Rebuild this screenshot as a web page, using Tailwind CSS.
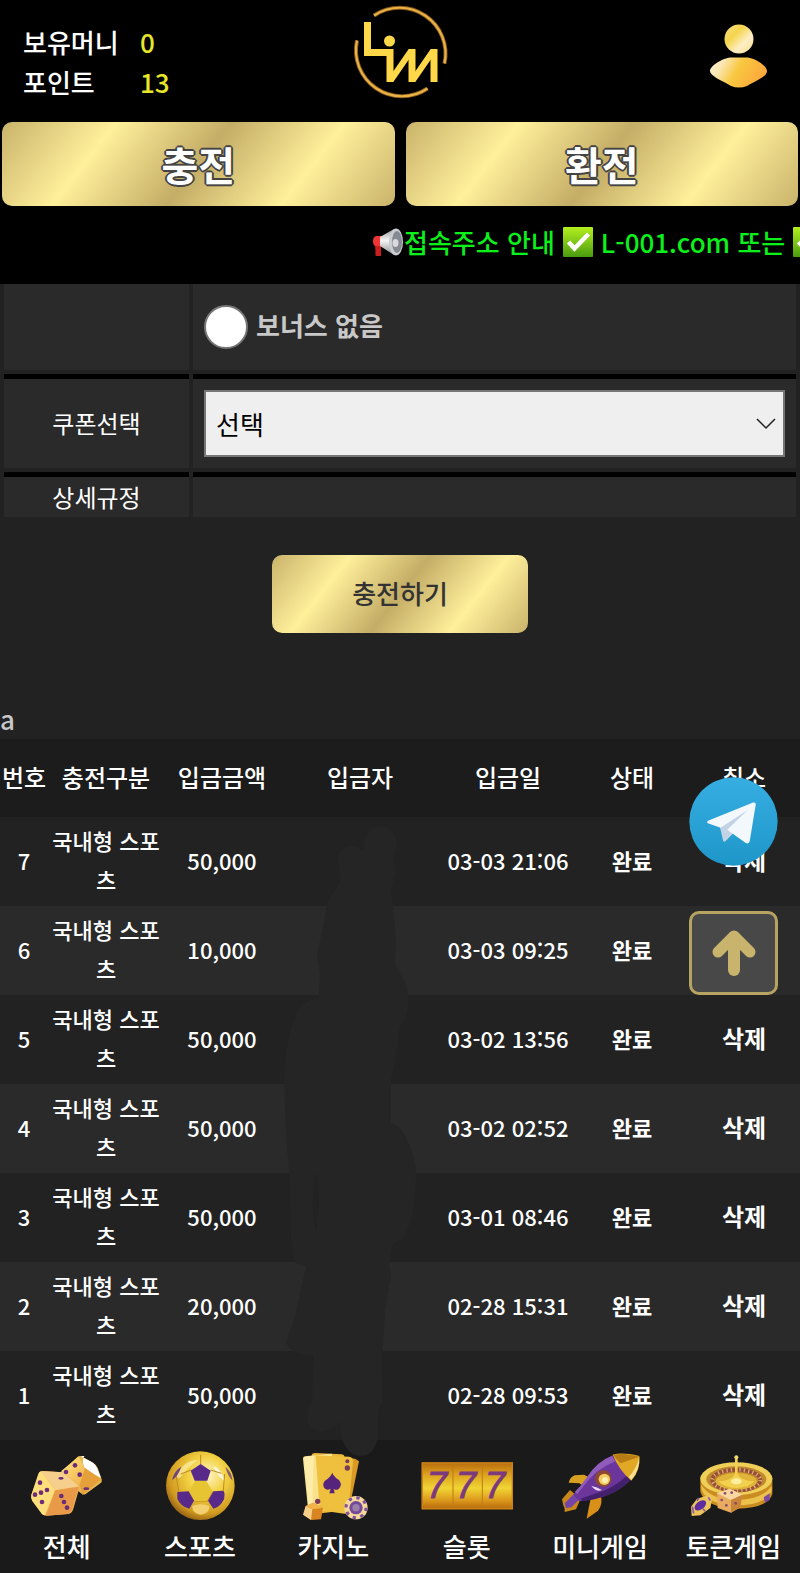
<!DOCTYPE html>
<html lang="ko">
  <head>
    <meta charset="UTF-8" />
    <meta name="viewport" content="width=device-width, initial-scale=1.0" />
    <title>충전</title>
    <script src="https://cdn.jsdelivr.net/npm/@tailwindcss/browser@4"></script>
  </head>
  <body class="bg-[#222] min-h-screen font-['Noto_Sans_CJK_KR',sans-serif] text-white">
    <!-- Header -->
    <header class="bg-black">
      <div class="relative flex items-center justify-between h-[122px] pt-[2px] pl-[23px] pr-[31px]">
        <dl class="grid grid-cols-[117px_auto] text-[26px] leading-[40px] font-medium">
          <dt>보유머니</dt>
          <dd class="text-[#e6e62a]">0</dd>
          <dt>포인트</dt>
          <dd class="text-[#e6e62a]">13</dd>
        </dl>

        <a href="#" aria-label="홈" class="absolute inset-x-0 top-0 mx-auto w-[110px]">
          <svg viewBox="0 0 110 105" class="w-full" fill="none">
            <g stroke="#8a5a14" stroke-width="4">
              <path d="M29 15.5A46 46 0 0 1 99.5 63.5" />
              <path d="M12 40.5A46 46 0 0 0 82.5 88.5" />
            </g>
            <g stroke="#e8b24a" stroke-width="2.2">
              <path d="M29 15.5A46 46 0 0 1 99.5 63.5" />
              <path d="M12 40.5A46 46 0 0 0 82.5 88.5" />
            </g>
            <g stroke="#ffd84a">
              <path d="M22.5 22V52.5H45V82" stroke-width="7" />
              <path d="M67 49V82M89 49V82" stroke-width="7" />
              <path d="M46 80L66 51M68 80L88 51" stroke-width="6" />
            </g>
            <circle cx="44.500" cy="41" r="5.500" fill="#ffd84a" />
          </svg>
        </a>

        <a href="#" aria-label="내 정보">
          <svg viewBox="0 0 60 66" class="w-[60px] h-[66px] mt-[-14px]">
            <defs>
              <linearGradient id="head" x1="0" y1="0" x2="1" y2="1">
                <stop offset="0" stop-color="#fbe08a" />
                <stop offset=".35" stop-color="#f5d54c" />
                <stop offset=".65" stop-color="#fdeec4" />
                <stop offset="1" stop-color="#f8e090" />
              </linearGradient>
              <linearGradient id="torso" x1="0" y1="0" x2="1" y2=".3">
                <stop offset="0" stop-color="#fff3d6" />
                <stop offset=".25" stop-color="#fbe7b4" />
                <stop offset=".55" stop-color="#f8c840" />
                <stop offset="1" stop-color="#fdaa3c" />
              </linearGradient>
            </defs>
            <circle cx="30" cy="17" r="14.500" fill="url(#head)" />
            <path d="M21 35.500h18c7 1 19 8 19 13.500s-10 9-20 15q-8 3-16 0C12 58 1 54 1 49s12-12.500 20-13.500z" fill="url(#torso)" />
          </svg>
        </a>
      </div>

      <div class="grid grid-cols-2 gap-[11px] px-[2px]">
        <button class="h-[84px] rounded-[10px] bg-[linear-gradient(128deg,#c9b36b,#fff09b_25%,#c4ad66_50%,#fff09b_75%,#c9b36b)] text-[40px] font-bold [text-shadow:-2px_0_#444,2px_0_#444,0_-2px_#444,0_2px_#444,-1px_-1px_#444,1px_-1px_#444,-1px_1px_#444,1px_1px_#444]">충전</button>
        <button class="h-[84px] rounded-[10px] bg-[linear-gradient(128deg,#c9b36b,#fff09b_25%,#c4ad66_50%,#fff09b_75%,#c9b36b)] text-[40px] font-bold [text-shadow:-2px_0_#444,2px_0_#444,0_-2px_#444,0_2px_#444,-1px_-1px_#444,1px_-1px_#444,-1px_1px_#444,1px_1px_#444]">환전</button>
      </div>

      <!-- Notice ticker -->
      <div class="overflow-hidden pt-4 pb-[22px]">
        <p class="flex items-center ml-[46.500%] text-[26px] leading-[40px] font-medium text-[#0cf01c] whitespace-nowrap">
          <svg viewBox="0 0 32 30" class="w-8 h-[30px] shrink-0">
            <defs>
              <linearGradient id="horn" x1="0" y1="0" x2="0" y2="1">
                <stop offset="0" stop-color="#9a9a9a" />
                <stop offset=".45" stop-color="#f4f4f4" />
                <stop offset="1" stop-color="#8c8c8c" />
              </linearGradient>
            </defs>
            <path d="M3 17l6-1v13H4.500q-1.500 0-1-3z" fill="#c81e1e" />
            <path d="M4 9h6v10H3q-2-1-2-5t3-5z" fill="#ee3434" />
            <path d="M8 10L22 2v26L8 19z" fill="url(#horn)" />
            <ellipse cx="24" cy="15" rx="7" ry="13.500" fill="#c9ccd0" />
            <ellipse cx="25" cy="15" rx="5" ry="11" fill="#858a90" />
            <ellipse cx="23.500" cy="16" rx="3" ry="4" fill="#d8dadc" />
          </svg>
          <span>접속주소 안내</span>
          <svg viewBox="0 0 30 30" class="w-[30px] h-[30px] mx-2 shrink-0">
            <defs>
              <linearGradient id="check" x1="0" y1="0" x2="0" y2="1">
                <stop offset="0" stop-color="#b4f01e" />
                <stop offset="1" stop-color="#4a9c10" />
              </linearGradient>
            </defs>
            <rect width="30" height="30" rx="1" fill="url(#check)" />
            <path d="M5.500 15l6 6.500L25.500 7" fill="none" stroke="#fff" stroke-width="4.500" />
          </svg>
          <span>L-001.com 또는</span>
          <svg viewBox="0 0 30 30" class="w-[30px] h-[30px] mx-2 shrink-0">
            <rect width="30" height="30" rx="1" fill="url(#check)" />
            <path d="M5.500 15l6 6.500L25.500 7" fill="none" stroke="#fff" stroke-width="4.500" />
          </svg>
        </p>
      </div>
    </header>

    <main>
      <!-- Deposit form -->
      <form>
        <div class="grid grid-cols-[185px_1fr] gap-1 px-1 text-[24px] leading-[40px]">
          <div class="bg-[#2a2a2a]"></div>
          <div class="flex items-center h-[86px] px-[11px] bg-[#2a2a2a]">
            <input id="noBonus" type="radio" name="bonus" class="appearance-none size-11 rounded-full bg-white border-2 border-[#767676]" />
            <label for="noBonus" class="ml-2 pb-1 text-[26px] font-bold text-[#c8c8c8]">보너스 없음</label>
          </div>

          <label for="coupon" class="flex items-center justify-center pb-[2px] border-t-[5px] border-black bg-[#2a2a2a]">쿠폰선택</label>
          <div class="relative p-[11px] border-t-[5px] border-black bg-[#2a2a2a]">
            <select id="coupon" class="appearance-none block w-full h-[67px] px-[10px] bg-[#efefef] border-2 border-[#767676] text-[26px] text-black">
              <option>선택</option>
            </select>
            <svg viewBox="0 0 20 12" class="absolute right-5 top-[39px] w-5 h-3 pointer-events-none" fill="none" stroke="#222" stroke-width="1.500">
              <path d="M1 1l9 9 9-9" />
            </svg>
          </div>

          <div class="text-center border-t-[5px] border-black bg-[#2a2a2a]">상세규정</div>
          <div class="border-t-[5px] border-black bg-[#2a2a2a]"></div>
        </div>

        <button type="button" class="block w-64 h-[78px] mx-auto mt-[38px] pb-1 rounded-[10px] bg-[linear-gradient(128deg,#c9b36b,#fff09b_25%,#c4ad66_50%,#fff09b_75%,#c9b36b)] text-[26px] font-medium text-[#333]">충전하기</button>
      </form>

      <p class="mt-[66px] text-[26px] leading-[40px] font-medium text-[#c8c8c8]">a</p>

      <!-- Deposit history -->
      <section class="relative">
        <table class="w-full table-fixed border-collapse text-center text-[22px] leading-[39px] font-medium">
          <thead>
            <tr class="h-[78px] bg-[#1c1c1c] text-[24px]">
              <th class="w-[6%] pb-1 font-medium whitespace-nowrap">번호</th>
              <th class="w-[14.500%] pb-1 font-medium">충전구분</th>
              <th class="w-[14.500%] pb-1 font-medium">입금금액</th>
              <th class="w-[20%] pb-1 font-medium">입금자</th>
              <th class="w-[17%] pb-1 font-medium">입금일</th>
              <th class="w-[14%] pb-1 font-medium">상태</th>
              <th class="w-[14%] pb-1 font-medium">취소</th>
            </tr>
          </thead>
          <tbody id="historyBody">
            <!-- JS will populate here -->
          </tbody>
        </table>

        <!-- Covers the depositor names -->
        <svg viewBox="0 0 180 650" class="absolute left-[32.500%] top-[71px] w-[180px] h-[650px] pointer-events-none" fill="#252525">
          <path d="M104 33C105 22 112 16 121 16S137 25 137 35L133 50 136 60 131 80 133 97 136 130 135 155 146 174Q150 195 147 205L140 217 136 245 131 270 131 300V313Q143 317 147 330 156 345 156 365C156 395 152 415 142 430L133 434 129 455 131 465 125 500 122 550 123 590 118 602V620C118 635 112 646 101 646S80 635 80 612L78 614Q60 627 50 616 44 606 52 590L53 545Q30 545 26 532L34 510 46 457 37 454Q32 445 31 430L30 375 26 320 24 270C25 240 30 215 38 200Q46 190 59 187L60 165 57 145 64 112 68 90 80 73 78 48Q80 36 92 36 100 37 104 42z" />
          <path d="M55 364q5 6 4 28l-3 30q-6-24-1-58z" fill="#222" />
        </svg>

        <!-- Floating buttons -->
        <div class="absolute right-[22px] top-[38px] flex flex-col gap-[45px]">
          <a href="#" aria-label="텔레그램">
            <svg viewBox="0 0 266 268" class="w-[89px] h-[89px]">
              <defs>
                <linearGradient id="tg" x1="0" y1="0" x2="0" y2="1">
                  <stop offset="0" stop-color="#37aee2" />
                  <stop offset="1" stop-color="#1e96c8" />
                </linearGradient>
              </defs>
              <circle cx="133" cy="134" r="133" fill="url(#tg)" />
              <path d="M92 150l10 43q3 4 8-1l24-24-10-22z" fill="#c3d3e6" />
              <path d="M54 134q-3 4 4 6l36 13 20 6 56 40q10 4 12-6l18-111q0-7-8-5L58 131z" fill="#f3f8fd" />
              <path d="M94 153l82-54-62 60-8 30z" fill="#c3d3e6" />
            </svg>
          </a>
          <button aria-label="맨 위로" class="flex items-center justify-center w-[89px] h-[84px] rounded-[10px] border-[3px] border-[#b8a462] bg-[#484848]">
            <svg viewBox="0 0 44 48" class="w-11 h-12" fill="none" stroke="#c8b46c" stroke-linecap="round" stroke-linejoin="round">
              <path d="M22 8v33" stroke-width="12" />
              <path d="M6 23L22 7l16 16" stroke-width="11" />
            </svg>
          </button>
        </div>
      </section>
    </main>

    <!-- Bottom navigation -->
    <nav class="grid grid-cols-6 pt-[10px] pb-[7px] bg-[#1a1a1a] text-center text-[26px] leading-[40px] font-medium whitespace-nowrap">
      <a href="#" class="flex flex-col items-center gap-1">
        <svg viewBox="50 30 300 216" class="w-[100px] h-[72px]">
          <defs>
            <linearGradient id="dieTop" x1="0" y1="0" x2="1" y2="1">
              <stop offset="0" stop-color="#ffe884" />
              <stop offset="1" stop-color="#f0b04c" />
            </linearGradient>
          </defs>
          <path d="M232 50q6-4 14 0l32 18q10 6 14 16l12 34q2 8-4 12l-44 32q-8 4-14-2l-50-40-10-22z" fill="#e8b850" />
          <path d="M234 50l-52 44 58 42 14-52z" fill="url(#dieTop)" />
          <path d="M240 48l38 20q8 6 12 16l12 30-42-22q-20-22-8-44z" fill="#fff" />
          <path d="M254 84l50 34-58 46-8-30z" fill="#e5a03c" />
          <path d="M118 96q6-4 14-3l56 4 44 34q6 6 5 13l-18 62q-4 14-16 16l-64 5q-8 0-13-5l-30-40q-5-8-3-18z" fill="#f2b75c" />
          <path d="M122 94l42 56-30 76q-6 0-10-5l-28-38q-5-8-3-18l21-64q3-6 8-7z" fill="#ffdf7c" />
          <path d="M122 94l66 3 48 42-70 12z" fill="#f7cf8c" />
          <path d="M236 140l-20 66q-4 14-14 16l-66 5 29-76z" fill="#e89a48" />
          <g fill="#6c2c78">
            <circle cx="224" cy="76" r="7" /><circle cx="197" cy="96" r="7" /><circle cx="238" cy="104" r="7" />
            <circle cx="119" cy="128" r="7" /><circle cx="140" cy="150" r="7" /><circle cx="122" cy="158" r="7" /><circle cx="104" cy="164" r="7" /><circle cx="125" cy="186" r="7" />
            <circle cx="183" cy="168" r="7" /><circle cx="191" cy="186" r="7" /><circle cx="200" cy="203" r="7" />
            <ellipse cx="182" cy="115" rx="8" ry="4" /><ellipse cx="258" cy="146" rx="9" ry="4" />
          </g>
        </svg>
        전체
      </a>
      <a href="#" class="flex flex-col items-center gap-1">
        <svg viewBox="450 30 300 216" class="w-[100px] h-[72px]">
          <defs>
            <radialGradient id="ball" cx=".6" cy=".35" r=".7">
              <stop offset="0" stop-color="#fff6c8" />
              <stop offset=".4" stop-color="#f3d142" />
              <stop offset=".8" stop-color="#d09a20" />
              <stop offset="1" stop-color="#8e5a14" />
            </radialGradient>
          </defs>
          <circle cx="601" cy="137" r="103" fill="url(#ball)" />
          <path d="M528 112q20-52 66-52-30 20-54 54z" fill="#fff8c8" opacity=".55" />
          <path d="M640 78q26 10 34 46-18-10-34-46z" fill="#fff" opacity=".75" />
          <g fill="none" stroke="#c08a20" stroke-width="3">
            <path d="M602 44v28M574 90l-32 12M632 90l32 10M568 152l14 32h40l16-30M528 104l8 50M674 102l-4 50" />
          </g>
          <path d="M586 122h32l20 32-18 30h-36l-18-30z" fill="#e6c432" />
          <g fill="#59298a">
            <path d="M602 72l30 20-10 30h-38l-12-30z" />
            <path d="M532 156l34-2 16 28-14 24q-26-6-36-30z" />
            <path d="M640 154l30-2q6 6 2 26-12 24-32 28l-16-24z" />
            <path d="M544 80q-20 10-28 40 18-10 28-40z" opacity=".8" />
            <path d="M676 80q18 14 22 42-14-12-22-42z" opacity=".7" />
          </g>
          <path d="M576 198q26-10 52 0 0 24-26 26-24-2-26-26z" fill="#f2d070" />
        </svg>
        스포츠
      </a>
      <a href="#" class="flex flex-col items-center gap-1">
        <svg viewBox="40 30 300 216" class="w-[100px] h-[72px]">
          <path d="M170 46l86 10 12 8-32 156-90-12z" fill="#d89a24" />
          <path d="M126 44q2-5 10-5l80 4q8 1 9 8l6 160-90 10z" fill="#e9b838" />
          <path d="M100 56q0-6 6-7l80-8 22 170-92 4z" fill="#fbe79a" />
          <path d="M132 46l106 4q14 2 12 16l-14 146q-2 10-12 9l-84-12q-10-2-12-12z" fill="#eec03e" />
          <path d="M104 52l34-6 12 160-32-8z" fill="#fff0ae" opacity=".7" />
          <path d="M188 98q4 12 20 22 12 16-2 28-8 4-14-2l3 14h-16l4-14q-8 6-16 1-12-10-2-24 18-12 23-25z" fill="#56247c" />
          <g fill="#7a3a60"><circle cx="233" cy="64" r="6" /><circle cx="233" cy="84" r="8" /><circle cx="144" cy="184" r="8" /></g>
          <path d="M108 198l24-10 28 16-6 34-30 2-22-16z" fill="#d98420" />
          <path d="M108 198l20 10-4 32-24-16z" fill="#f8cf88" />
          <path d="M108 198l24-10 28 16-32 4z" fill="#f2b448" />
          <circle cx="259" cy="203" r="35" fill="#f6d99a" />
          <circle cx="259" cy="203" r="30" fill="none" stroke="#8050a0" stroke-width="9" stroke-dasharray="10 13.560" />
          <circle cx="259" cy="203" r="20" fill="#75499a" />
          <circle cx="259" cy="203" r="11" fill="#9a80a8" />
        </svg>
        카지노
      </a>
      <a href="#" class="flex flex-col items-center gap-1">
        <svg viewBox="440 30 300 216" class="w-[100px] h-[72px]">
          <defs>
            <linearGradient id="reel" x1="0" y1="0" x2="0" y2="1">
              <stop offset="0" stop-color="#b86a0c" />
              <stop offset=".25" stop-color="#dca01e" />
              <stop offset=".55" stop-color="#f0d434" />
              <stop offset=".8" stop-color="#dc9a1c" />
              <stop offset="1" stop-color="#b8680c" />
            </linearGradient>
          </defs>
          <rect x="454" y="67" width="274" height="141" fill="url(#reel)" />
          <path d="M548 68v139M636 68v139" stroke="#c07a14" stroke-width="3" />
          <rect x="456" y="69" width="270" height="137" fill="none" stroke="#c88418" stroke-width="4" />
          <g fill="#7b3a7e" stroke="#7b3a7e" stroke-width="3" font-family="Liberation Sans, sans-serif" font-size="110" font-style="italic" text-anchor="middle">
            <text x="500" y="173">7</text>
            <text x="587" y="173">7</text>
            <text x="674" y="173">7</text>
          </g>
        </svg>
        슬롯
      </a>
      <a href="#" class="flex flex-col items-center gap-1">
        <svg viewBox="60 30 300 216" class="w-[100px] h-[72px]">
          <path d="M172 146l-24-16-32-2q4-16 18-22l28-2 26 14z" fill="#d8a020" />
          <path d="M182 176l30-12q8 28-8 48l-34 24q6-34 12-60z" fill="#d89018" />
          <path d="M96 178l24-28 32 26-14 32-34 8q2-12-4-20z" fill="#c8881c" />
          <path d="M104 190l30-30 14 18-24 24-16 2z" fill="#7444a8" />
          <path d="M248 46q24 40 54 74-44 44-110 58l-44 6-18-20q22-24 42-52 30-48 76-66z" fill="#6b359c" />
          <path d="M246 48l10 16q-60 24-98 78l-16 20-8-6q20-18 38-46 30-46 74-62z" fill="#8f5cba" />
          <path d="M302 120l-10-14q-46 44-100 56l-40 14 6 8 34-6q66-14 110-58z" fill="#43206c" />
          <path d="M248 44q28-8 80 4 4 44-24 74-36-30-56-78z" fill="#e0a824" />
          <path d="M250 44q30-6 78 6l-56 20q-14-12-22-26z" fill="#b87c14" />
          <path d="M328 50q2 40-24 70l-8-10q24-24 32-60z" fill="#f8e090" />
          <circle cx="220" cy="116" r="25" fill="#8c4a30" />
          <circle cx="223" cy="118" r="17" fill="#f4cc60" />
          <circle cx="225" cy="120" r="9" fill="#fff0b0" />
          <path d="M184 138q14 2 32 12-16 8-32-12z" fill="#ead8f4" />
        </svg>
        미니게임
      </a>
      <a href="#" class="flex flex-col items-center gap-1">
        <svg viewBox="460 30 300 216" class="w-[100px] h-[72px]">
          <path d="M512 112v44q16 46 108 50 96-2 108-44v-48z" fill="#c98c20" />
          <path d="M514 134q30 46 106 46t106-42v16q-22 42-106 42T516 150z" fill="#ecc24c" />
          <ellipse cx="620" cy="116" rx="108" ry="49" fill="#efcf58" />
          <ellipse cx="620" cy="118" rx="90" ry="39" fill="#c08a2c" />
          <ellipse cx="620" cy="120" rx="72" ry="31" fill="none" stroke="#965038" stroke-width="12" />
          <ellipse cx="620" cy="120" rx="72" ry="31" fill="none" stroke="#dca870" stroke-width="11" stroke-dasharray="4 9" />
          <ellipse cx="620" cy="124" rx="62" ry="25" fill="#e0b438" />
          <path d="M566 124q40 0 50-22V56h8v46q10 22 50 22-20 20-54 20t-54-20z" fill="#f2d050" />
          <circle cx="620" cy="52" r="6" fill="#f4dc70" />
          <ellipse cx="620" cy="124" rx="16" ry="9" fill="#fff0a0" />
          <path d="M702 172l18-12v20l-14 8z" fill="#7c48a0" />
          <path d="M562 160l38-14 38 18-6 38-28 16-40-14z" fill="#e8ac60" />
          <path d="M562 160l38-14 38 18-34 16z" fill="#f8d8a0" />
          <path d="M604 180l34-16-6 38-28 16z" fill="#c88438" />
          <g fill="#8c4868"><circle cx="586" cy="160" r="4" /><circle cx="606" cy="158" r="4" /><circle cx="576" cy="180" r="4" /><circle cx="590" cy="196" r="4" /><circle cx="618" cy="190" r="4" /></g>
          <path d="M484 200l18-24 38-12 8 10-6 30-30 22-26 2z" fill="#ecc45c" />
          <ellipse cx="512" cy="196" rx="20" ry="12" transform="rotate(-38 512 196)" fill="#5c2ca0" />
          <path d="M488 200l4 20M508 174l-6 8M536 172l6 10M526 214l-6-8" stroke="#8858a0" stroke-width="5" />
        </svg>
        토큰게임
      </a>
    </nav>

    <script>
      const deposits = [
        { no: 7, amount: 50000, date: "03-03 21:06" },
        { no: 6, amount: 10000, date: "03-03 09:25" },
        { no: 5, amount: 50000, date: "03-02 13:56" },
        { no: 4, amount: 50000, date: "03-02 02:52" },
        { no: 3, amount: 50000, date: "03-01 08:46" },
        { no: 2, amount: 20000, date: "02-28 15:31" },
        { no: 1, amount: 50000, date: "02-28 09:53" },
      ];

      const tbody = document.getElementById("historyBody");
      deposits.forEach((item) => {
        const tr = document.createElement("tr");
        tr.className = "h-[89px] even:bg-[#2a2a2a]";
        tr.innerHTML = `
          <td class="pb-[2px]">${item.no}</td>
          <td class="pb-1">국내형 스포츠</td>
          <td class="pb-[2px]">${item.amount.toLocaleString("en-US")}</td>
          <td></td>
          <td class="pb-[2px] whitespace-nowrap">${item.date}</td>
          <td class="pb-[2px] font-bold">완료</td>
          <td class="pb-1"><button class="text-[24px] font-bold">삭제</button></td>
        `;
        tbody.appendChild(tr);
      });
    </script>
  </body>
</html>
